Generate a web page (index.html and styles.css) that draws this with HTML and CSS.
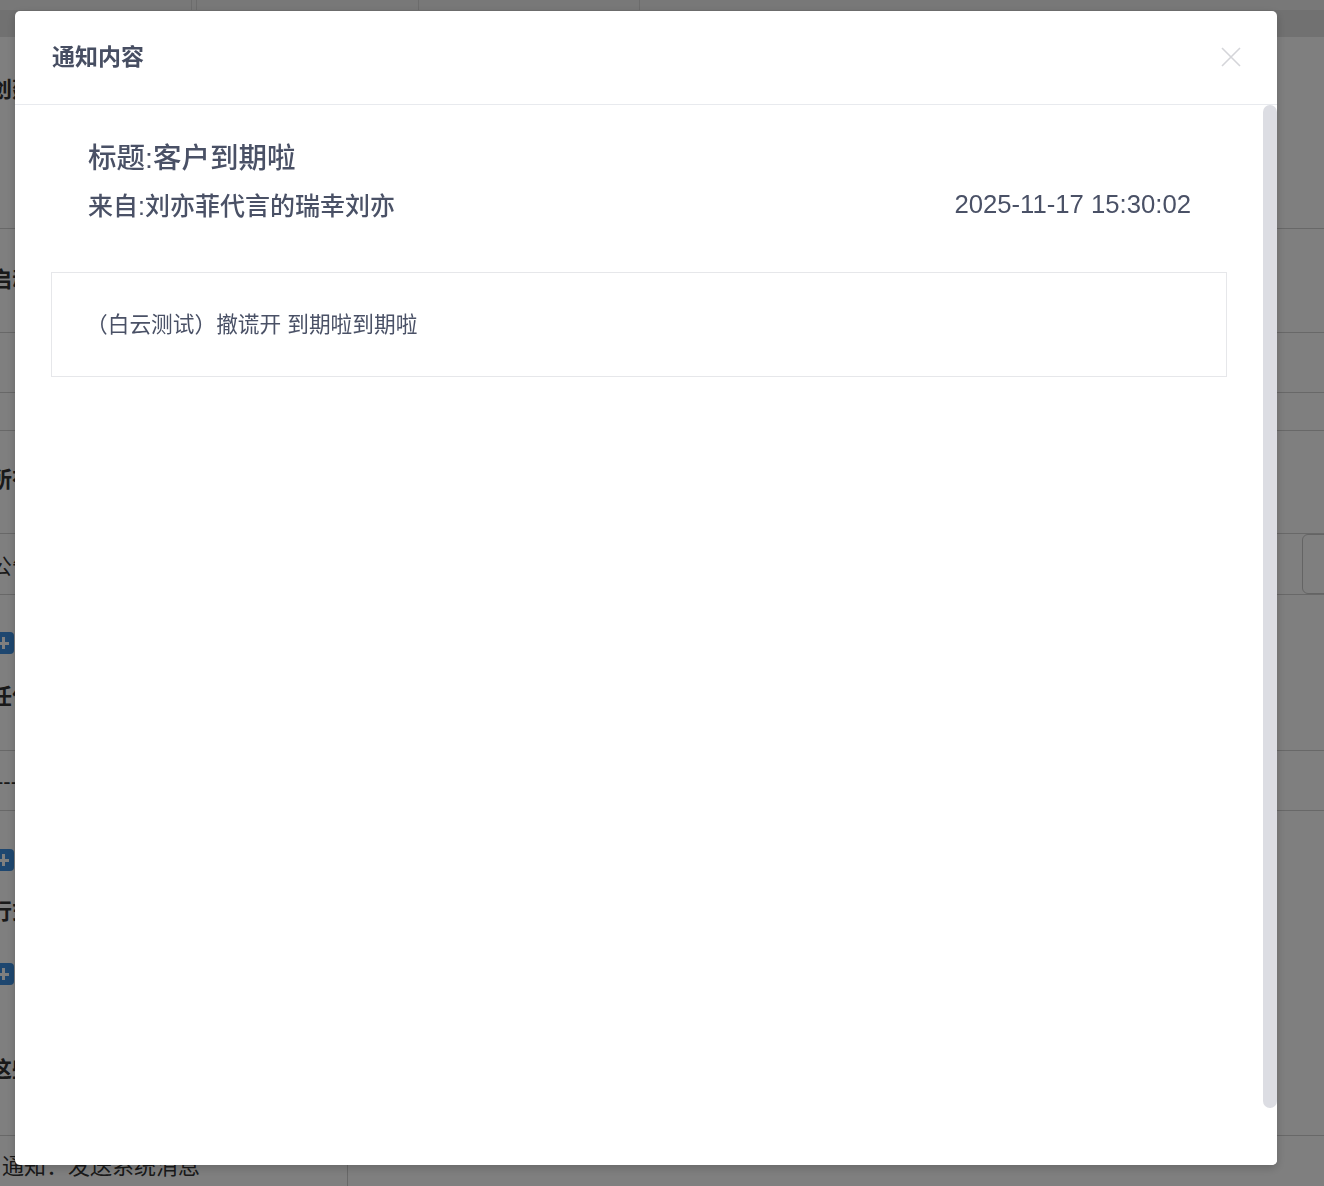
FILE: index.html
```html
<!DOCTYPE html>
<html lang="zh-CN">
<head>
    <meta charset="UTF-8">
    <meta name="viewport" content="width=device-width, initial-scale=1.0">
    <title>通知内容</title>
    <link rel="stylesheet" href="styles.css">
</head>
<body>
    <div class="page">
        <div class="tabs">
            <div class="tab tab-a"></div>
            <div class="tab tab-b"></div>
            <div class="tab tab-c"></div>
            <div class="tab tab-d"></div>
        </div>
        <div class="toolbar"></div>
        <div class="form">
            <div class="row row-1"><span class="label bold">创建</span></div>
            <div class="row row-2"><span class="label bold">启动</span></div>
            <div class="row row-3"></div>
            <div class="row row-4"></div>
            <div class="row row-5"><span class="label bold">所有</span></div>
            <div class="row row-6"><span class="label">公告</span><span class="ghost-btn"></span></div>
            <div class="row row-7">
                <span class="plus"></span>
                <span class="label bold">任何</span>
            </div>
            <div class="row row-8"><span class="label dash">---</span></div>
            <div class="row row-9">
                <span class="plus"></span>
                <span class="label bold">行式</span>
                <span class="plus"></span>
                <span class="label bold last">这些</span>
            </div>
            <div class="row row-10">
                <span class="foot-text">通知：发送系统消息</span>
                <span class="foot-split"></span>
            </div>
        </div>
    </div>

    <div class="mask"></div>

    <div class="modal">
        <div class="modal-header">
            <div class="modal-title">通知内容</div>
            <button class="modal-close" aria-label="关闭">
                <svg width="20" height="20" viewBox="0 0 20 20">
                    <path d="M1 1 L19 19 M19 1 L1 19" stroke="#d4d5d9" stroke-width="1.6" fill="none"/>
                </svg>
            </button>
        </div>
        <div class="modal-body">
            <div class="body-inner">
                <div class="info">
                    <div class="notice-title">标题:客户到期啦</div>
                    <div class="notice-meta">
                        <span class="from">来自:刘亦菲代言的瑞幸刘亦</span>
                        <span class="date">2025-11-17 15:30:02</span>
                    </div>
                </div>
                <div class="notice-content">（白云测试）撤谎开 到期啦到期啦</div>
            </div>
            <div class="scrollbar"><div class="thumb"></div></div>
        </div>
    </div>
</body>
</html>
```

FILE: styles.css
```css
body {
    margin: 0;
    font-family: "Liberation Sans", "Noto Sans CJK SC", sans-serif;
    overflow: hidden;
}

/* page behind the dialog */
.page {
    height: 1186px;
    background-color: #fff;
    color: #333;
    overflow: hidden;
}

.tabs {
    display: flex;
    height: 10px;
    background-color: #f0f0f0;
}

.tab {
    border-right: 1px solid #d8d8d8;
}

.tab-a { width: 191px; }
.tab-b { width: 4px; }
.tab-c { width: 221px; }
.tab-d { width: 220px; }

.toolbar {
    height: 27px;
    background-color: #e2e2e2;
}

.row {
    display: flex;
    flex-direction: column;
    border-bottom: 1px solid #d0d0d0;
    box-sizing: border-box;
    position: relative;
}

.row-1 { height: 192px; padding-top: 38px; }
.row-2 { height: 104px; padding-top: 36px; }
.row-3 { height: 60px; }
.row-4 { height: 38px; }
.row-5 { height: 103px; padding-top: 34px; }
.row-6 { height: 61px; padding-top: 18px; flex-direction: row; }
.row-7 { height: 156px; padding-top: 37px; }
.row-8 { height: 60px; padding-top: 16px; }
.row-9 { height: 325px; padding-top: 38px; }
.row-10 { height: 60px; flex-direction: row; border-bottom: none; }

.label {
    font-size: 22px;
    line-height: 30px;
    margin-left: -10px;
    white-space: nowrap;
}

.label.bold {
    font-weight: bold;
}

.label.dash {
    margin-left: -4px;
}

.row-7 .label { margin-top: 28px; }
.row-9 .plus + .label { margin-top: 26px; margin-bottom: 36px; }
.row-9 .label.last { margin-top: 70px; }

.plus {
    display: block;
    width: 22px;
    height: 22px;
    margin-left: -8px;
    border-radius: 4px;
    background: linear-gradient(#fff, #fff) center / 12px 3px no-repeat,
                linear-gradient(#fff, #fff) center / 3px 12px no-repeat,
                #3d8fe0;
}

.ghost-btn {
    margin-left: auto;
    margin-top: -18px;
    width: 80px;
    height: 60px;
    border: 1px solid #c8c8c8;
    border-radius: 6px;
    margin-right: -58px;
    box-sizing: border-box;
}

.foot-text {
    width: 345px;
    padding-left: 2px;
    padding-top: 16px;
    font-size: 22px;
    line-height: 30px;
    color: #333;
}

.foot-split {
    border-left: 1px solid #d0d0d0;
    height: 60px;
}

.mask {
    position: fixed;
    inset: 0;
    background-color: rgba(0, 0, 0, 0.5);
}

/* dialog */
.modal {
    position: fixed;
    left: 15px;
    top: 11px;
    width: 1262px;
    height: 1154px;
    background-color: #fff;
    border-radius: 5px;
    box-shadow: 0 3px 10px rgba(0, 0, 0, 0.2);
    display: flex;
    flex-direction: column;
    overflow: hidden;
    color: #4a5166;
}

.modal-header {
    display: flex;
    align-items: center;
    justify-content: space-between;
    height: 94px;
    flex-shrink: 0;
    box-sizing: border-box;
    padding: 0 36px 5px 37px;
    border-bottom: 1px solid #e8eaee;
}

.modal-title {
    font-size: 23px;
    font-weight: bold;
    color: #474e62;
}

.modal-close {
    border: none;
    background: none;
    padding: 0;
    width: 20px;
    height: 20px;
    margin-top: 4px;
    cursor: pointer;
}

.modal-body {
    flex: 1;
    display: flex;
    overflow: hidden;
}

.body-inner {
    flex: 1;
    padding: 0 36px;
}

.scrollbar {
    width: 14px;
    background-color: #fff;
}

.thumb {
    height: 1003px;
    border-radius: 7px;
    background-color: #dcdde3;
}

.info {
    padding: 32px 36px 0 37px;
}

.notice-title {
    font-size: 28.5px;
    line-height: 42px;
    font-weight: 500;
}

.notice-meta {
    display: flex;
    justify-content: space-between;
    align-items: center;
    margin-top: 7px;
    height: 36px;
}

.from {
    font-size: 25px;
    font-weight: 500;
}

.date {
    font-size: 25.7px;
}

.notice-content {
    margin-top: 50px;
    border: 1px solid #e6e7ea;
    padding: 36px 34px;
    font-size: 21.7px;
    line-height: 31px;
}
```
